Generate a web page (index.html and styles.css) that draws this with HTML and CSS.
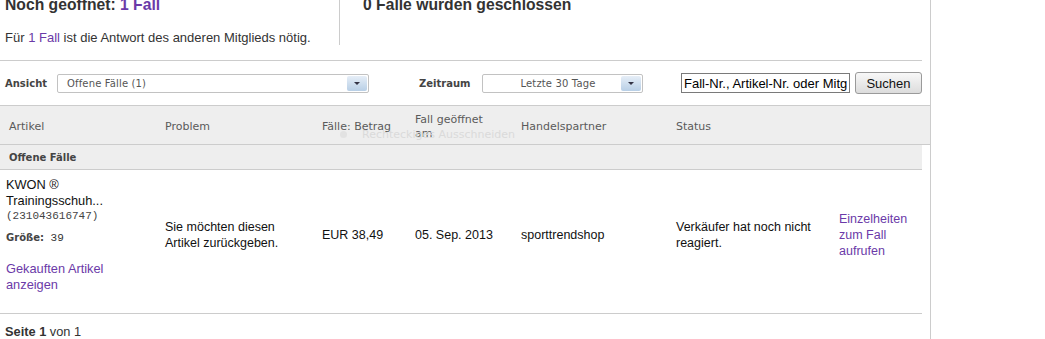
FILE: index.html
```html
<!DOCTYPE html>
<html>
<head>
  <title>Fälle</title>
  <link rel="stylesheet" href="styles.css">
</head>
<body>
  <div class="page">
    <div class="summary">
      <div class="summary-open">
        <h2>Noch geöffnet: <a href="#">1 Fall</a></h2>
        <p>Für <a href="#">1 Fall</a> ist die Antwort des anderen Mitglieds nötig.</p>
      </div>
      <div class="summary-closed">
        <h2>0 Fälle wurden geschlossen</h2>
      </div>
    </div>

    <div class="filters">
      <span class="label">Ansicht</span>
      <div class="select select-view">
        <span class="select-text">Offene Fälle (1)</span>
        <span class="select-arrow"></span>
      </div>
      <span class="label label-period">Zeitraum</span>
      <div class="select select-period">
        <span class="select-text">Letzte 30 Tage</span>
        <span class="select-arrow"></span>
      </div>
      <input class="search" type="text" value="Fall-Nr., Artikel-Nr. oder Mitgliedsname">
      <button class="search-btn">Suchen</button>
    </div>

    <div class="cases">
      <div class="row head">
        <div class="cell c-item">Artikel</div>
        <div class="cell">Problem</div>
        <div class="cell">Fälle: Betrag</div>
        <div class="cell c-date">Fall geöffnet am</div>
        <div class="cell">Handelspartner</div>
        <div class="cell">Status</div>
        <div class="cell"></div>
      </div>
      <div class="group">Offene Fälle</div>
      <div class="row case">
        <div class="cell c-item">
          <div class="item-title">KWON ® Trainingsschuh...</div>
          <div class="item-id">(231043616747)</div>
          <div class="item-size"><b>Größe:</b> 39</div>
          <a class="item-link" href="#">Gekauften Artikel anzeigen</a>
        </div>
        <div class="cell c-wrap">Sie möchten diesen Artikel zurückgeben.</div>
        <div class="cell">EUR 38,49</div>
        <div class="cell">05. Sep. 2013</div>
        <div class="cell">sporttrendshop</div>
        <div class="cell c-wrap">Verkäufer hat noch nicht reagiert.</div>
        <div class="cell"><a href="#">Einzelheiten zum Fall aufrufen</a></div>
      </div>
    </div>

    <div class="pager"><b>Seite 1</b> von 1</div>

    <div class="snip-hint"><span class="snip-dot"></span>Rechteckiges Ausschneiden</div>
  </div>
</body>
</html>
```

FILE: styles.css
```css
body {
  margin: 0;
  background: #fff;
  font-family: "Liberation Sans", Arial, sans-serif;
  color: #222;
}

a {
  color: #6b3aa8;
  text-decoration: none;
}

.page {
  position: relative;
  width: 922px;
  padding-right: 8px;
  border-right: 1px solid #ccc;
  margin-top: -4px;
  padding-bottom: 4px;
}

/* summary */
.summary {
  display: flex;
  border-bottom: 1px solid #ccc;
  padding-bottom: 15px;
}

.summary h2 {
  margin: 0;
  font-size: 15.7px;
  line-height: 18px;
  color: #333;
}

.summary-open {
  width: 334px;
  padding-left: 5px;
  border-right: 1px solid #ccc;
}

.summary-open p {
  margin: 17px 0 0;
  font-size: 13px;
  line-height: 14px;
  color: #333;
}

.summary-closed {
  padding-left: 23px;
}

/* filters */
.filters {
  display: flex;
  align-items: center;
  height: 44px;
  margin-right: -8px;
  padding-left: 5px;
  border-bottom: 1px solid #ccc;
  font-family: "DejaVu Sans", Verdana, sans-serif;
  font-size: 10px;
}

.label {
  font-weight: bold;
  color: #444;
  width: 52px;
}

.label-period {
  margin-left: 50px;
  width: 63px;
}

.select {
  display: flex;
  align-items: center;
  height: 17px;
  border: 1px solid #c2c2c2;
  border-radius: 2px;
  background: #fff;
}

.select-view {
  width: 310px;
}

.select-period {
  width: 159px;
}

.select-text {
  flex: 1;
  padding-left: 9px;
  color: #555;
  letter-spacing: 0.15px;
}

.select-period .select-text {
  text-align: center;
  padding-left: 12px;
}

.select-arrow {
  position: relative;
  width: 20px;
  height: 15px;
  margin-right: 1px;
  border-radius: 2px;
  background: linear-gradient(#e6eef7, #b8cfe6);
}

.select-arrow::after {
  content: "";
  position: absolute;
  left: 7px;
  top: 6px;
  border-left: 3px solid transparent;
  border-right: 3px solid transparent;
  border-top: 3px solid #334;
}

.search {
  margin-left: 38px;
  width: 163px;
  height: 18px;
  padding: 0 2px;
  border: 1px solid #7a7a7a;
  font-family: "Liberation Sans", Arial, sans-serif;
  font-size: 13px;
  color: #000;
}

.search-btn {
  margin-left: 5px;
  width: 67px;
  height: 22px;
  border: 1px solid #9a9a9a;
  border-radius: 3px;
  background: linear-gradient(#f8f8f8, #dcdcdc);
  font-family: "Liberation Sans", Arial, sans-serif;
  font-size: 13px;
  color: #111;
}

/* table */
.row {
  display: grid;
  grid-template-columns: 160px 157px 93px 106px 155px 163px 88px;
}

.cell {
  padding-left: 5px;
}

.head {
  height: 38px;
  align-items: center;
  margin-right: -8px;
  background: #eee;
  border-bottom: 1px solid #ccc;
  font-family: "DejaVu Sans", Verdana, sans-serif;
  font-size: 11px;
  line-height: 14px;
  color: #5a5a5a;
}

.head .cell {
  padding-top: 3px;
}

.head .c-item {
  padding-left: 9px;
}

.head .c-date {
  padding-right: 25px;
}

.group {
  height: 24px;
  line-height: 25px;
  padding-left: 9px;
  background: #eee;
  border-bottom: 1px solid #ccc;
  font-family: "DejaVu Sans", Verdana, sans-serif;
  font-size: 10px;
  font-weight: bold;
  color: #444;
}

.case {
  align-items: center;
  padding: 7px 0 20px;
  border-bottom: 1px solid #ccc;
  font-size: 12.5px;
  line-height: 16px;
  color: #111;
}

.case .c-item {
  padding-left: 6px;
  padding-right: 30px;
}

.c-wrap {
  padding-right: 10px;
}

.item-title {
  font-size: 12.8px;
}

.item-id {
  font-family: "Liberation Mono", "Courier New", monospace;
  font-size: 11px;
  line-height: 14px;
  color: #444;
}

.item-size {
  margin-top: 8px;
  font-family: "Liberation Mono", "Courier New", monospace;
  font-size: 11px;
  line-height: 14px;
  color: #333;
}

.item-size b {
  font-family: "DejaVu Sans", Verdana, sans-serif;
  font-size: 10px;
  color: #444;
}

.item-link {
  display: block;
  margin-top: 16px;
  font-size: 12.8px;
}

.pager {
  padding: 10px 0 0 5px;
  font-size: 12.8px;
  color: #333;
}

/* screen snip hint over the table head */
.snip-hint {
  position: absolute;
  left: 340px;
  top: 132px;
  font-family: "DejaVu Sans", Verdana, sans-serif;
  font-size: 11px;
  color: #dadada;
}

.snip-dot {
  display: inline-block;
  width: 7px;
  height: 7px;
  margin-right: 15px;
  border-radius: 50%;
  background: #e2e2e2;
}
```
